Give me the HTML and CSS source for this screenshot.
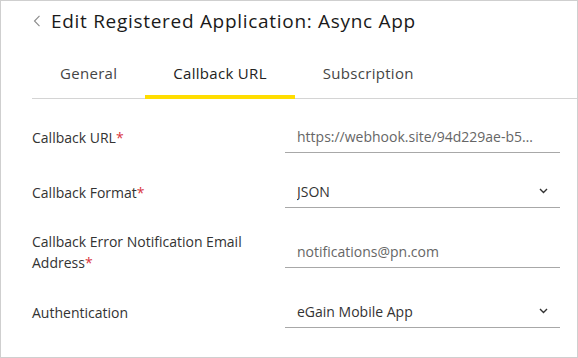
FILE: index.html
```html
<!DOCTYPE html>
<html lang="en">
<head>
<meta charset="utf-8">
<title>Edit Registered Application</title>
<link rel="stylesheet" href="styles.css">
</head>
<body>
<div class="panel">
  <div class="header">
    <svg class="back" width="8" height="12" viewBox="0 0 8 12"><path d="M6.5 0.8 L1.5 6 L6.5 11.2" fill="none" stroke="#8a8a8a" stroke-width="1.1"/></svg>
    <h1 class="title">Edit Registered Application: Async App</h1>
  </div>
  <div class="tabs">
    <div class="tab">General</div>
    <div class="tab active">Callback URL</div>
    <div class="tab">Subscription</div>
  </div>
  <div class="form">
    <div class="row">
      <div class="label">Callback URL<span class="req">*</span></div>
      <div class="field"><span class="value muted">https://webhook.site/94d229ae-b5c1-4a7e-9f3d-2b8e61c0a7f4</span></div>
    </div>
    <div class="row">
      <div class="label">Callback Format<span class="req">*</span></div>
      <div class="field select"><span class="value">JSON</span>
        <svg class="caret" width="9" height="6" viewBox="0 0 9 6"><path d="M1 1 L4.5 4.5 L8 1" fill="none" stroke="#333" stroke-width="1.4"/></svg>
      </div>
    </div>
    <div class="row">
      <div class="label">Callback Error Notification Email Address<span class="req">*</span></div>
      <div class="field"><span class="value muted">notifications@pn.com</span></div>
    </div>
    <div class="row">
      <div class="label">Authentication</div>
      <div class="field select"><span class="value">eGain Mobile App</span>
        <svg class="caret" width="9" height="6" viewBox="0 0 9 6"><path d="M1 1 L4.5 4.5 L8 1" fill="none" stroke="#333" stroke-width="1.4"/></svg>
      </div>
    </div>
  </div>
</div>
</body>
</html>
```

FILE: styles.css
```css
* { box-sizing: border-box; }
html, body { margin: 0; padding: 0; background: #fff; }
body { font-family: "Open Sans", "Noto Sans", sans-serif; color: #333; }

.panel {
  width: 578px;
  height: 358px;
  border: 1px solid #cfcfcf;
  padding: 8px 0 0 31px;
  overflow: hidden;
}

.header {
  display: flex;
  align-items: center;
  height: 24px;
}
.back { margin: 0 10px 0 1px; flex: none; }
.title {
  margin: 0;
  font-size: 19px;
  line-height: 24px;
  letter-spacing: 0.7px;
  font-weight: 400;
  color: #1a1a1a;
}

.tabs {
  display: flex;
  border-bottom: 1px solid #d4d4d4;
}
.tab {
  font-size: 15px;
  line-height: 20px;
  letter-spacing: 0.3px;
  color: #454545;
  padding: 30px 28px 12px;
  border-bottom: 4px solid transparent;
  margin-bottom: -1px;
}
.tab.active {
  color: #222;
  border-bottom-color: #ffdd00;
}

.form {
  padding-top: 22px;
  padding-right: 17px;
  display: flex;
  flex-direction: column;
  gap: 23px;
}
.row {
  display: flex;
  align-items: center;
}
.label {
  width: 253px;
  padding-right: 20px;
  font-size: 14px;
  line-height: 21px;
  color: #333;
}
.req { color: #d9363e; }

.field {
  flex: 1;
  height: 32px;
  border-bottom: 1px solid #a8a8a8;
  display: flex;
  align-items: center;
  padding: 0 23px 1px 12px;
  font-size: 14px;
  min-width: 0;
}
.value {
  flex: 1;
  min-width: 0;
  white-space: nowrap;
  overflow: hidden;
  text-overflow: ellipsis;
  color: #333;
}
.value.muted { color: #666; }
.select { padding-right: 12px; }
.caret { flex: none; }
```
